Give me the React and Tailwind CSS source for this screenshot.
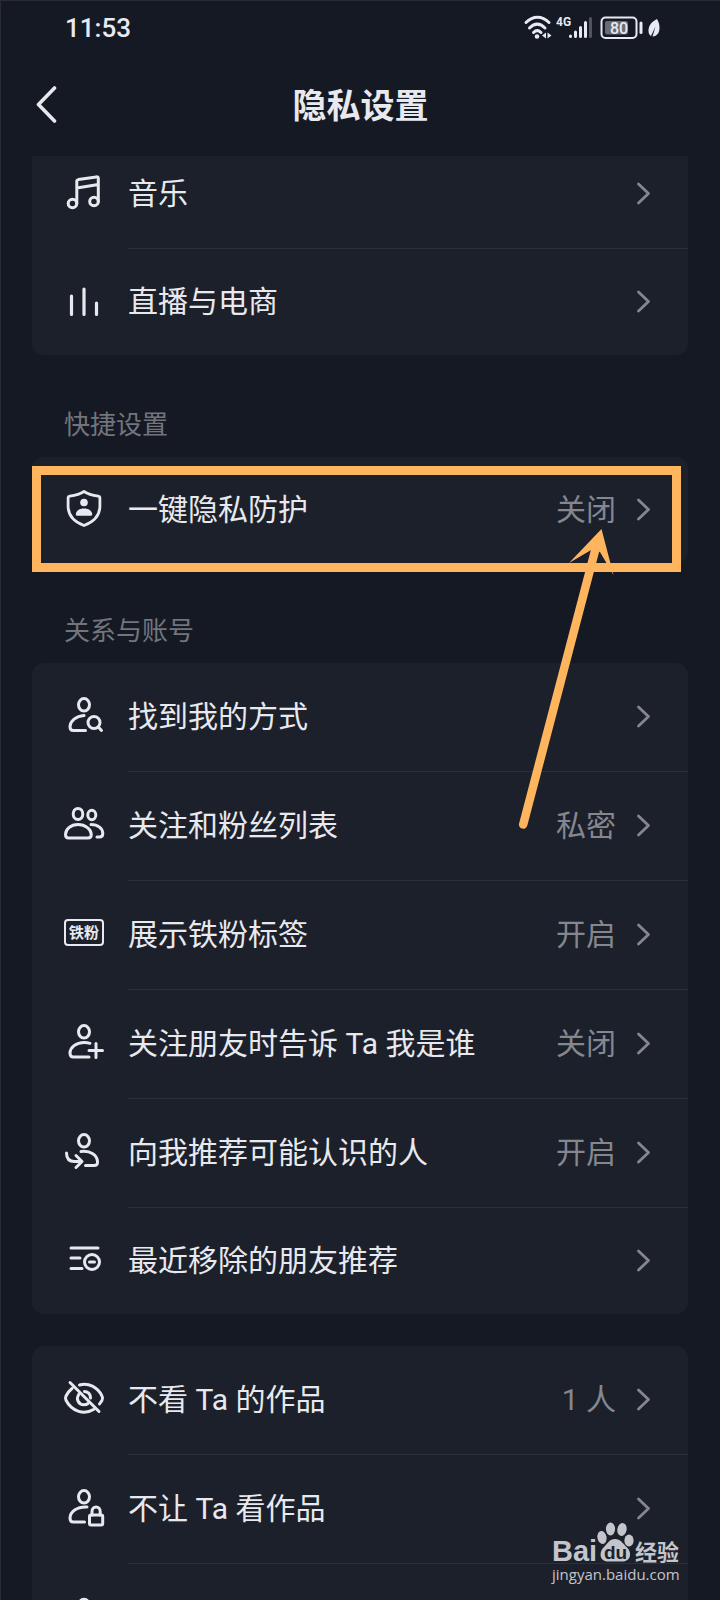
const GREY = '#85878f';

function Svg({ children, fill = 'none' }) {
  return (
    <svg width="42" height="42" viewBox="0 0 42 42" fill={fill} stroke="currentColor" strokeWidth="3" strokeLinecap="round" strokeLinejoin="round" className="shrink-0" aria-hidden="true">
      {children}
    </svg>
  );
}

const Head = () => <ellipse cx="21" cy="8.8" rx="5.5" ry="6.2" />;

const icons = {
  music: (
    <Svg>
      <circle cx="9.5" cy="30.5" r="4.3" />
      <circle cx="31" cy="28.5" r="4.3" />
      <path d="M13.8 30.5V8.5C13.8 7.300 14.300 6.800 15.300 6.600L33.300 3.900C34.700 3.700 35.300 4.300 35.300 5.500V28.500M13.800 15L35.300 11.500" />
    </Svg>
  ),
  bars: (
    <Svg>
      <path strokeWidth="3.200" d="M8.500 16V34.500M21 9V34.500M33.500 23V34.500" />
    </Svg>
  ),
  shield: (
    <Svg>
      <path strokeWidth="2.800" d="M21 3.500C17 6.200 11.500 7.500 6.800 8.200C5.600 8.400 5.100 9 5.100 10.200V18C5.100 28 11.500 34 21 37.500C30.500 34 36.900 28 36.900 18V10.200C36.900 9 36.400 8.400 35.200 8.200C30.500 7.500 25 6.200 21 3.500Z" />
      <circle cx="21" cy="14.500" r="3.800" fill="currentColor" stroke="none" />
      <path d="M12.800 26C13.300 22.500 16.500 20.500 21 20.500S28.700 22.500 29.200 26C29.300 27.200 28.700 27.800 27.600 27.800H14.400C13.300 27.800 12.700 27.200 12.800 26Z" fill="currentColor" stroke="none" />
    </Svg>
  ),
  find: (
    <Svg>
      <Head />
      <path d="M21 19.500C13 20 7.200 25 7 30.500C7 33.500 8 34.500 10.300 34.500H22.500" />
      <circle cx="31" cy="26.500" r="6" />
      <path d="M35.300 31L38.500 34.500" />
    </Svg>
  ),
  people: (
    <Svg>
      <ellipse cx="15" cy="9" rx="4.800" ry="5.600" />
      <ellipse cx="28.800" cy="10" rx="4" ry="4.800" />
      <path d="M15 19.500C7.500 19.500 2.500 24.500 2.500 29.500C2.500 32 3.500 33 5.500 33H25C27.300 33 28.300 32 28.300 29.500C28.300 24.500 22.500 19.500 15 19.500Z" />
      <path d="M28 19.500C35 19.500 39.800 23.500 39.800 28.500C39.800 31 38.800 32 36.500 32H34" />
    </Svg>
  ),
  add: (
    <Svg>
      <Head />
      <path d="M27 20.300C25.300 19.700 23.300 19.500 21 19.500C13 19.500 7.200 24.500 7 30C7 32.700 8 34 10.300 34H26M33 20.500V34.500M26 27.500H39.500" />
    </Svg>
  ),
  recommend: (
    <Svg>
      <Head />
      <path d="M18 19.500C28 18.500 34 23 34.500 29.500C34.700 32.500 33.500 33.500 31 33.500H22.500M3.500 21C3.500 27 6 29.500 11.500 29.500H18M13 23.500L19 29.500L13 35.500" />
    </Svg>
  ),
  removed: (
    <Svg>
      <path d="M8 9H35M8 19H17M8 29.500H19" />
      <circle cx="29" cy="23" r="7.500" />
      <path d="M26.500 23H31.500" />
    </Svg>
  ),
  eyeOff: (
    <Svg>
      <path d="M16.500 6C25.500 3.500 34.500 8 39 17C39.800 18.500 39.800 19.800 39 21.300L36.500 25M9 9.500C6.500 11.500 4.500 14 3 17C2.300 18.500 2.300 19.800 3 21.300C9 33 21.500 36 30.500 30.500M7 3.500L36 32.500" />
      <path d="M16 15C12.500 20 15.500 25.800 21 25.800C22.500 25.800 24 25.300 25 24.500M21.500 12.500C25.500 13 27.500 15.500 27.500 19" />
    </Svg>
  ),
  lock: (
    <Svg>
      <Head />
      <path d="M24 19C13.500 18.500 7.200 24 7 30C7 32.700 8 34 10.300 34H21.500" />
      <rect x="26.500" y="27" width="13.200" height="10" rx="1.500" />
      <path d="M29 27V23.500C29 17.500 37.200 17.500 37.200 23.500V27" />
    </Svg>
  ),
  person: (
    <Svg>
      <ellipse cx="21" cy="10.500" rx="5.500" ry="6.200" />
      <path d="M21 21C13 21 7 26 7 32C7 35 8 36 10.300 36H31.700C34 36 35 35 35 32C35 26 29 21 21 21Z" />
    </Svg>
  ),
};

function FanBadge() {
  return (
    <span className="mb-1 flex h-[27px] w-10 items-center justify-center rounded border-2 border-current pt-0.5 text-[15px] leading-none font-bold">
      铁粉
    </span>
  );
}

function Row({ icon, label, value }) {
  return (
    <li className="group">
      <button type="button" aria-label={label ? undefined : '更多'} className="flex h-[109px] w-full items-stretch pl-8 text-left group-last:h-[106px]">
        <span className="flex w-16 items-center pb-0.5">
          <span className="-ml-px flex w-[42px] justify-center">{icon === 'fan' ? <FanBadge /> : icons[icon]}</span>
        </span>
        <span className="flex flex-1 items-center border-b border-[#2b2f3a] pr-9 text-[30px] leading-10 group-last:border-b-0">
          <span className="flex-1">{label}</span>
          {value && <span className="mr-[18px] text-[#85878f]">{value}</span>}
          <svg width="18" height="24" viewBox="0 0 18 24" fill="none" stroke={GREY} strokeWidth="2.800" strokeLinecap="round" strokeLinejoin="round" aria-hidden="true">
            <path d="M4.500 2L14.500 11.500L4.500 21" />
          </svg>
        </span>
      </button>
    </li>
  );
}

function Card({ rows }) {
  return (
    <ul className="overflow-hidden rounded-xl bg-[#1c202b]">
      {rows.map((r, i) => (
        <Row key={i} {...r} />
      ))}
    </ul>
  );
}

function StatusBar() {
  return (
    <div className="flex h-[54px] shrink-0 items-center justify-between pr-[58px] pl-16 text-[#e8e9f2]">
      <time className="text-[26px] leading-8 font-medium">11:53</time>
      <svg width="140" height="28" viewBox="0 0 140 28" fill="none" stroke="currentColor" strokeLinecap="round" aria-hidden="true">
        <g strokeWidth="3">
          <path d="M4 8.500C11 1.500 20 1.500 27 8.500M7.500 14C12.500 9 18 9 23 14M11.500 18.500C14 16 16.500 16 19 18.500" />
        </g>
        <circle cx="15" cy="22.500" r="2.300" fill="currentColor" stroke="none" />
        <path d="M20 21.500L24 18.500V24.500ZM25.500 18.500L29.500 21.500L25.500 24.500Z" fill="currentColor" stroke="none" />
        <text x="34" y="12" fill="currentColor" stroke="none" fontFamily="'Liberation Sans Narrow', Roboto, sans-serif" fontSize="12" fontWeight="700">4G</text>
        <path strokeWidth="3" d="M48.500 22V22.500M53.500 18V22.500M58.500 13.500V22.500M63.500 8.500V22.500" />
        <path strokeWidth="3" stroke="#51545e" d="M68.500 4.500V22.500" />
        <rect x="79.500" y="3.500" width="35" height="20.500" rx="4" strokeWidth="2" />
        <rect x="83" y="7" width="23" height="13.500" rx="2" fill="#696c73" stroke="none" />
        <text x="97" y="19.500" textAnchor="middle" fill="currentColor" stroke="none" fontFamily="Roboto, sans-serif" fontSize="16" fontWeight="500">80</text>
        <path strokeWidth="3" d="M119 9V18.500" />
        <path d="M135 5C129 8 126.500 12 126.500 17C126.500 19.500 127.500 21 129 22L133.500 12.500L130.500 22.500C135.500 22.500 137.500 18 137.500 14C137.500 10 136.500 7.500 135 5Z" fill="currentColor" stroke="none" />
      </svg>
    </div>
  );
}

function Highlight() {
  return (
    <div className="pointer-events-none absolute inset-0 z-10" aria-hidden="true">
      <div className="absolute top-[9px] right-[7px] left-0 h-[106px] border-[9px] border-[#ffb55e]" />
      <svg className="absolute top-[68px] right-[68px]" width="110" height="310" viewBox="0 0 110 310">
        <path d="M13.200 299.500L85.500 24" stroke="#ffb55e" strokeWidth="8.500" strokeLinecap="round" />
        <path d="M91.500 4L59 38L82 24.500L90 27L103.500 50Z" fill="#ffb55e" />
      </svg>
    </div>
  );
}

function Watermark() {
  return (
    <div className="pointer-events-none absolute right-10 bottom-4 w-32 text-[#c3c5cb]">
      <svg className="block" width="128" height="46" viewBox="0 0 128 46" fill="currentColor" aria-hidden="true">
        <text x="0" y="43" fontFamily="'Liberation Sans', sans-serif" fontSize="29" fontWeight="700">Bai</text>
        <ellipse cx="50" cy="19.500" rx="4.600" ry="6.500" transform="rotate(-10 50 19.500)" />
        <ellipse cx="58.500" cy="11" rx="4.600" ry="6.500" />
        <ellipse cx="70" cy="11.500" rx="4.600" ry="6.500" transform="rotate(12 70 11.500)" />
        <ellipse cx="77" cy="22.500" rx="4.600" ry="6" />
        <path d="M63 21C68.500 21 71 25.500 74.500 29C80 33.500 79.500 43.500 70.500 43.500H56C47 43.500 47 33.500 52 29C55.500 25.500 57.500 21 63 21Z" />
        <text x="63.500" y="40.500" textAnchor="middle" fill="#1c202b" fontFamily="'Liberation Sans', sans-serif" fontSize="19" fontWeight="700">du</text>
        <text x="83" y="42" fontFamily="'Noto Sans CJK SC', sans-serif" fontSize="22" fontWeight="700">经验</text>
      </svg>
      <div className="font-['Open_Sans',sans-serif] text-[15px] leading-5 font-medium whitespace-nowrap">jingyan.baidu.com</div>
    </div>
  );
}

export default function App() {
  return (
    <div className="relative flex h-screen flex-col overflow-hidden border-t border-l border-[#292c37] bg-[#151923] font-['Roboto','Noto_Sans_CJK_SC',sans-serif] text-[#e8e9ee]">
      <StatusBar />
      <header className="grid h-[101px] shrink-0 grid-cols-[1fr_auto_1fr] items-center px-8">
        <button type="button" aria-label="返回" className="justify-self-start">
          <svg width="28" height="40" viewBox="0 0 28 40" fill="none" stroke="currentColor" strokeWidth="3.600" strokeLinecap="round" strokeLinejoin="round" aria-hidden="true">
            <path d="M21.500 2L5.500 18.500L21.500 35" />
          </svg>
        </button>
        <h1 className="text-[34px] leading-10 font-bold">隐私设置</h1>
      </header>
      <main className="min-h-0 flex-1 overflow-hidden pr-8 pl-[31px]">
        <section className="-mt-4">
          <Card rows={[{ icon: 'music', label: '音乐' }, { icon: 'bars', label: '直播与电商' }]} />
        </section>
        <section className="mt-[52px]">
          <h2 className="mb-3.5 pl-8 text-[26px] leading-9 text-[#72757d]">快捷设置</h2>
          <div className="relative">
            <Card rows={[{ icon: 'shield', label: '一键隐私防护', value: '关闭' }]} />
            <Highlight />
          </div>
        </section>
        <section className="mt-[50px]">
          <h2 className="mb-3.5 pl-8 text-[26px] leading-9 text-[#72757d]">关系与账号</h2>
          <Card
            rows={[
              { icon: 'find', label: '找到我的方式' },
              { icon: 'people', label: '关注和粉丝列表', value: '私密' },
              { icon: 'fan', label: '展示铁粉标签', value: '开启' },
              { icon: 'add', label: '关注朋友时告诉 Ta 我是谁', value: '关闭' },
              { icon: 'recommend', label: '向我推荐可能认识的人', value: '开启' },
              { icon: 'removed', label: '最近移除的朋友推荐' },
            ]}
          />
        </section>
        <section className="mt-8">
          <Card
            rows={[
              { icon: 'eyeOff', label: '不看 Ta 的作品', value: '1 人' },
              { icon: 'lock', label: '不让 Ta 看作品' },
              { icon: 'person' },
            ]}
          />
        </section>
      </main>
      <Watermark />
    </div>
  );
}
